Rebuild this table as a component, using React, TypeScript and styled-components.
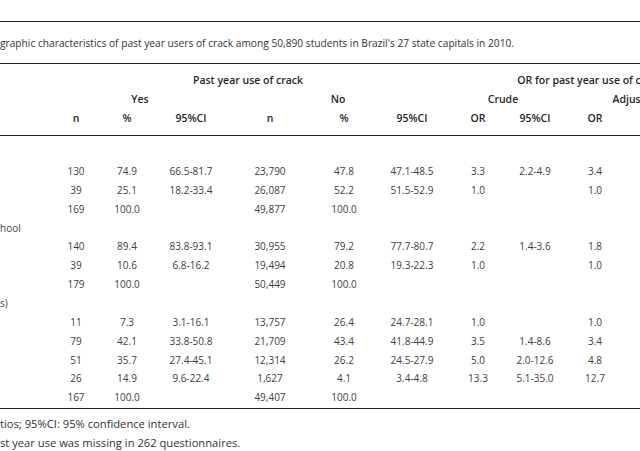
import styled, { createGlobalStyle } from 'styled-components';

const GlobalStyle = createGlobalStyle`
  html, body {
    margin: 0;
    background: #fff;
  }
  body {
    font-family: "Open Sans", "Noto Sans", sans-serif;
    color: #3d3d3d;
  }
`;

// label | Yes: n % CI | No: n % CI | Crude: OR CI | Adjusted: OR CI | spare columns past the edge
const COLUMNS = '50px 52px 50px 78px 80px 68px 68px 64px 50px 70px 60px 20px 24px';

const Frame = styled.div`
  width: 640px;
  height: 451px;
  overflow: hidden;
  padding-top: 21px;
  box-sizing: border-box;
`;

const Caption = styled.div`
  height: 41px;
  border-top: 1px solid #1f1f1f;
  border-bottom: 1px solid #1f1f1f;
  display: flex;
  align-items: center;
  font-size: 10.2px;
  color: #333;
  white-space: nowrap;
`;

const Head = styled.div`
  padding: 6.5px 0 7.5px;
  border-bottom: 1px solid #1f1f1f;
`;

const Body = styled.div`
  padding: 6.8px 0 1.3px;
  border-bottom: 1px solid #1f1f1f;
`;

const Row = styled.div<{ $h?: number }>`
  display: grid;
  grid-template-columns: ${COLUMNS};
  height: ${({ $h }) => $h ?? 19}px;
  align-items: center;
  width: 744px;
  white-space: nowrap;
`;

const HeadCell = styled.div<{ $from: number; $to: number }>`
  grid-column: ${({ $from, $to }) => `${$from} / ${$to}`};
  text-align: center;
  font-size: 10.5px;
  font-weight: 600;
  color: #262626;
`;

const Cell = styled.div`
  text-align: center;
  font-size: 10px;
`;

const Label = styled.div`
  font-size: 10px;
  text-align: left;
`;

const Notes = styled.div`
  padding-top: 5.5px;
  font-size: 11.2px;
  color: #333;
  white-space: nowrap;
`;

const Note = styled.div`
  height: 19px;
  display: flex;
  align-items: center;
`;

type Line = { label?: string; values?: string[] };

const lines: Line[] = [
  { label: '' },
  { values: ['130', '74.9', '66.5-81.7', '23,790', '47.8', '47.1-48.5', '3.3', '2.2-4.9', '3.4'] },
  { values: ['39', '25.1', '18.2-33.4', '26,087', '52.2', '51.5-52.9', '1.0', '', '1.0'] },
  { values: ['169', '100.0', '', '49,877', '100.0'] },
  { label: 'hool' },
  { values: ['140', '89.4', '83.8-93.1', '30,955', '79.2', '77.7-80.7', '2.2', '1.4-3.6', '1.8'] },
  { values: ['39', '10.6', '6.8-16.2', '19,494', '20.8', '19.3-22.3', '1.0', '', '1.0'] },
  { values: ['179', '100.0', '', '50,449', '100.0'] },
  { label: 's)' },
  { values: ['11', '7.3', '3.1-16.1', '13,757', '26.4', '24.7-28.1', '1.0', '', '1.0'] },
  { values: ['79', '42.1', '33.8-50.8', '21,709', '43.4', '41.8-44.9', '3.5', '1.4-8.6', '3.4'] },
  { values: ['51', '35.7', '27.4-45.1', '12,314', '26.2', '24.5-27.9', '5.0', '2.0-12.6', '4.8'] },
  { values: ['26', '14.9', '9.6-22.4', '1,627', '4.1', '3.4-4.8', '13.3', '5.1-35.0', '12.7'] },
  { values: ['167', '100.0', '', '49,407', '100.0'] },
];

const subHeads = ['n', '%', '95%CI', 'n', '%', '95%CI', 'OR', '95%CI', 'OR', '95%CI'];

export default function App() {
  return (
    <>
      <GlobalStyle />
      <Frame>
        <Caption>
          graphic characteristics of past year users of crack among 50,890 students in Brazil's 27 state
          capitals in 2010.
        </Caption>
        <Head>
          <Row>
            <HeadCell $from={2} $to={8}>Past year use of crack</HeadCell>
            <HeadCell $from={8} $to={14}>OR for past year use of crack</HeadCell>
          </Row>
          <Row>
            <HeadCell $from={2} $to={5}>Yes</HeadCell>
            <HeadCell $from={5} $to={8}>No</HeadCell>
            <HeadCell $from={8} $to={10}>Crude</HeadCell>
            <HeadCell $from={10} $to={13}>Adjusted</HeadCell>
          </Row>
          <Row>
            <div />
            {subHeads.map((h, i) => (
              <HeadCell key={i} $from={i + 2} $to={i + 3}>{h}</HeadCell>
            ))}
          </Row>
        </Head>
        <Body>
          {lines.map((line, i) => (
            <Row key={i} $h={18.85}>
              <Label>{line.label ?? ''}</Label>
              {(line.values ?? []).map((v, j) => (
                <Cell key={j}>{v}</Cell>
              ))}
            </Row>
          ))}
        </Body>
        <Notes>
          <Note>tios; 95%CI: 95% confidence interval.</Note>
          <Note>st year use was missing in 262 questionnaires.</Note>
        </Notes>
      </Frame>
    </>
  );
}
